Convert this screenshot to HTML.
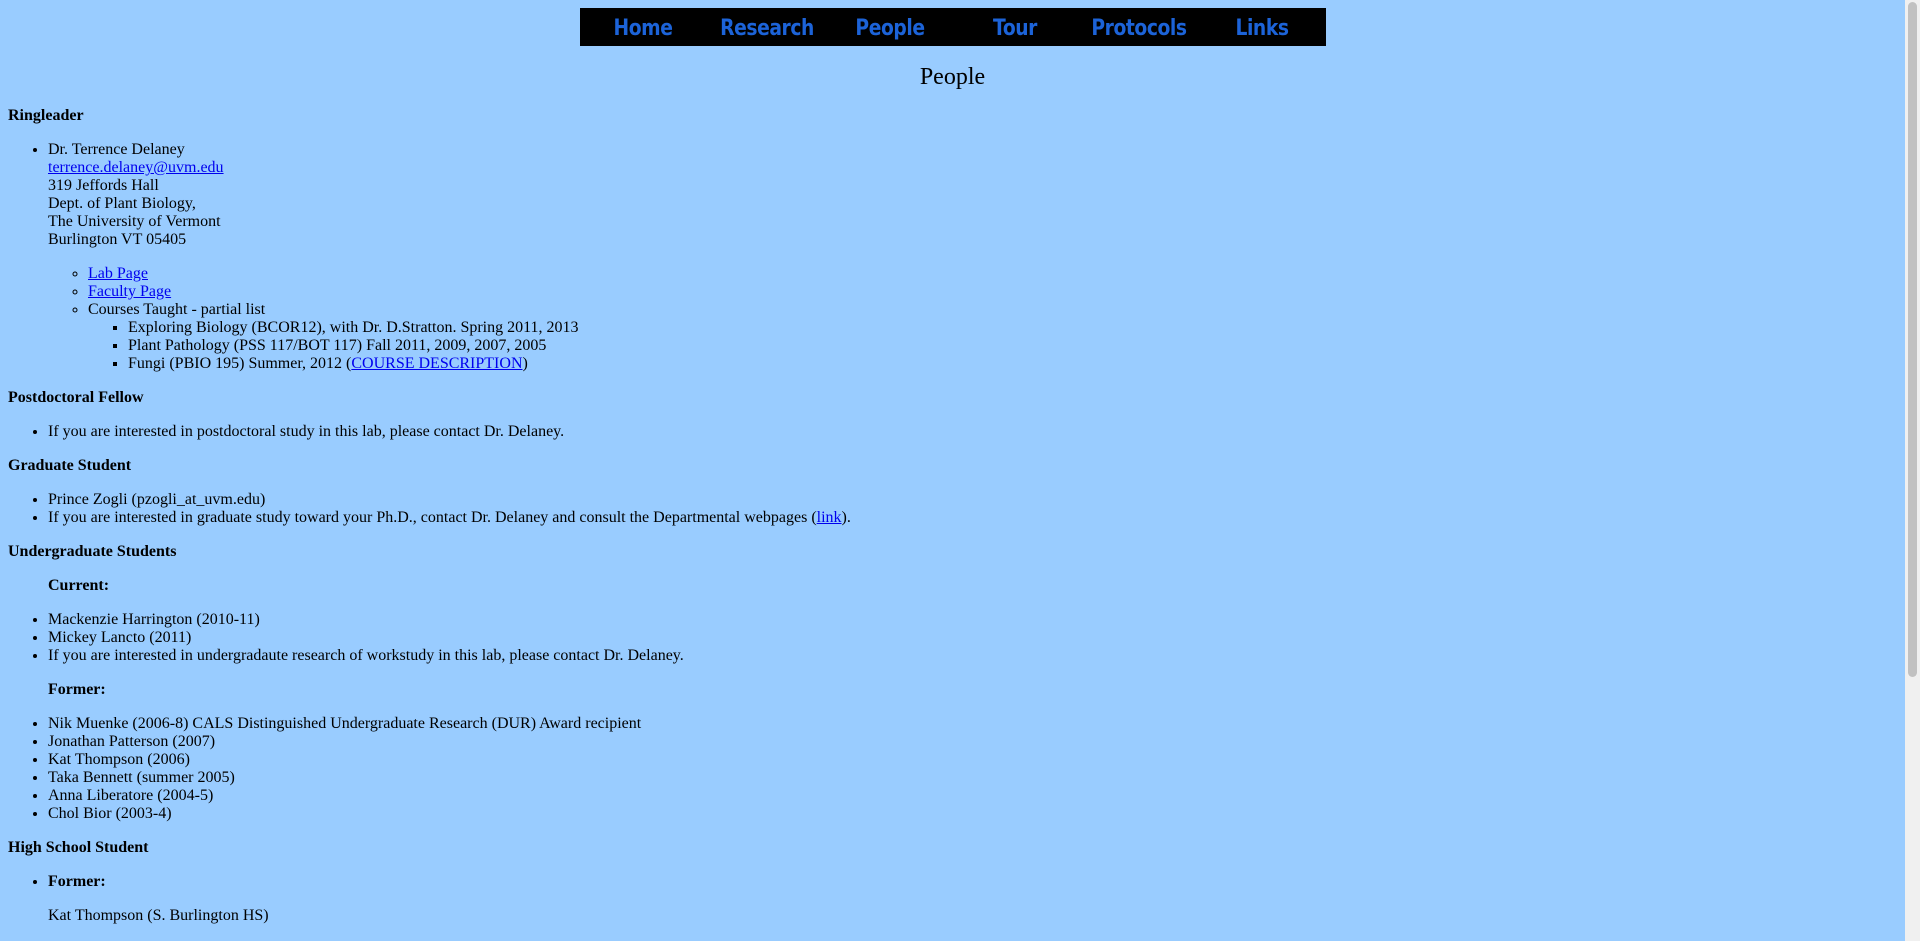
<!DOCTYPE html>
<html><head><meta charset="utf-8"><style>
html,body{margin:0;padding:0}
body{background:#99ccff;font-family:"Liberation Serif",serif;font-size:16px;line-height:18px;color:#000;margin:8px;width:1889px;height:925px;overflow:hidden}
.sb{position:fixed;right:0;top:0;width:15px;height:941px;background:#f0f0f0}
.sb div{position:absolute;left:3px;top:2px;width:9px;height:675px;background:#c1c1c1;border-radius:5px}
.nav{position:relative;width:746px;height:38px;background:#000;margin:0 auto 0 572px}
.nav span{position:absolute;top:8px;font-family:"DejaVu Sans",sans-serif;font-weight:bold;font-size:22px;line-height:26px;color:#1c63d8;transform:translateX(-50%) scaleX(0.85);letter-spacing:-0.5px;white-space:nowrap}
h1{font-weight:normal;font-size:24px;text-align:center;margin:18px 0 16px;line-height:27px}
p{margin:16px 0}
ul{margin:16px 0;padding-left:40px}
ul ul{margin:0}
a{color:#0000ee}
.ind{margin-left:40px}
</style></head><body>
<div class="sb"><div></div></div>
<div class="nav">
<span style="left:63px">Home</span><span style="left:187px">Research</span><span style="left:310px">People</span><span style="left:435px">Tour</span><span style="left:559px">Protocols</span><span style="left:682px">Links</span>
</div>
<h1>People</h1>
<p><b>Ringleader</b></p>
<ul><li>Dr. Terrence Delaney<br><a href="#">terrence.delaney@uvm.edu</a><br>319 Jeffords Hall<br>Dept. of Plant Biology,<br>The University of Vermont<br>Burlington VT 05405
<ul style="margin-top:16px"><li><a href="#">Lab Page</a></li><li><a href="#">Faculty Page</a></li><li>Courses Taught - partial list
<ul><li>Exploring Biology (BCOR12), with Dr. D.Stratton. Spring 2011, 2013</li><li>Plant Pathology (PSS 117/BOT 117) Fall 2011, 2009, 2007, 2005</li><li>Fungi (PBIO 195) Summer, 2012 (<a href="#">COURSE DESCRIPTION</a>)</li></ul></li></ul></li></ul>
<p><b>Postdoctoral Fellow</b></p>
<ul><li>If you are interested in postdoctoral study in this lab, please contact Dr. Delaney.</li></ul>
<p><b>Graduate Student</b></p>
<ul><li>Prince Zogli (pzogli_at_uvm.edu)</li><li>If you are interested in graduate study toward your Ph.D., contact Dr. Delaney and consult the Departmental webpages (<a href="#">link</a>).</li></ul>
<p><b>Undergraduate Students</b></p>
<p class="ind"><b>Current:</b></p>
<ul><li>Mackenzie Harrington (2010-11)</li><li>Mickey Lancto (2011)</li><li>If you are interested in undergradaute research of workstudy in this lab, please contact Dr. Delaney.</li></ul>
<p class="ind"><b>Former:</b></p>
<ul><li>Nik Muenke (2006-8) CALS Distinguished Undergraduate Research (DUR) Award recipient</li><li>Jonathan Patterson (2007)</li><li>Kat Thompson (2006)</li><li>Taka Bennett (summer 2005)</li><li>Anna Liberatore (2004-5)</li><li>Chol Bior (2003-4)</li></ul>
<p><b>High School Student</b></p>
<ul><li><b>Former:</b><p>Kat Thompson (S. Burlington HS)</p></li></ul>
</body></html>
